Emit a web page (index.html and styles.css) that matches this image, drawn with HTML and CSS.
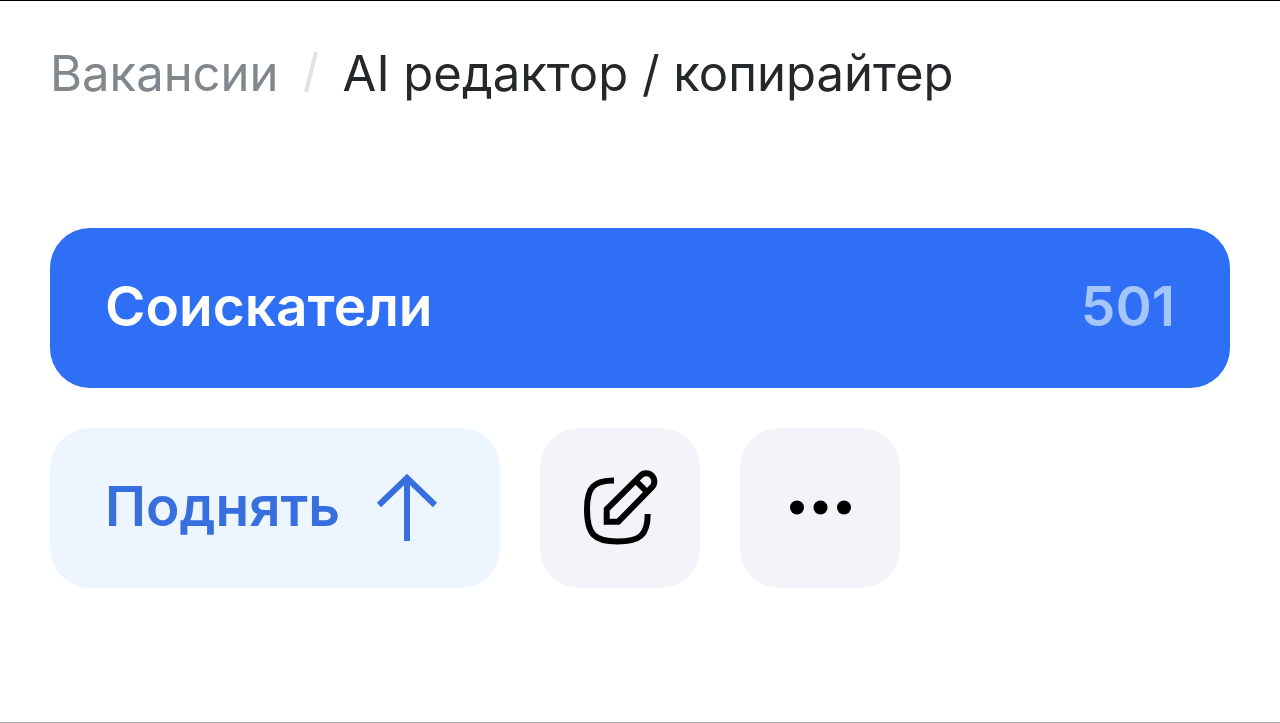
FILE: index.html
```html
<!DOCTYPE html>
<html lang="ru">
<head>
    <meta charset="UTF-8">
    <meta name="viewport" content="width=device-width, initial-scale=1">
    <title>AI редактор / копирайтер</title>
    <link rel="stylesheet" href="styles.css">
</head>
<body>
    <main class="page">
        <nav class="breadcrumbs">
            <a href="#">Вакансии</a>
            <svg class="separator" viewBox="0 0 16 44" aria-hidden="true">
                <path d="M13 0L3 40" />
            </svg>
            <span class="current">AI редактор / копирайтер</span>
        </nav>

        <button class="btn btn-primary" type="button">
            <span>Соискатели</span>
            <span class="count">501</span>
        </button>

        <div class="actions">
            <button class="btn btn-raise" type="button">
                <span>Поднять</span>
                <svg class="arrow" viewBox="0 0 72 72" aria-hidden="true">
                    <path d="M6 33L34 6L62 33M34 6V69" />
                </svg>
            </button>
            <button class="btn btn-icon" type="button" aria-label="Редактировать">
                <svg class="icon" viewBox="0 0 80 80" aria-hidden="true">
                    <path d="M34 12.5C14 12.5 7 19 7 41C7 66 14 73.5 37.5 73.5C60 73.5 67.7 67 67.7 46" />
                    <path d="M26.7 53.7V41.3L60.3 7.8A8.1 8.1 0 0 1 72 19.2L38.3 53.7ZM55.5 12.5L67 24" />
                </svg>
            </button>
            <button class="btn btn-icon" type="button" aria-label="Ещё">
                <svg class="icon dots" viewBox="0 0 80 80" aria-hidden="true">
                    <circle cx="17" cy="39.5" r="7" />
                    <circle cx="40.5" cy="39.5" r="7" />
                    <circle cx="64" cy="39.5" r="7" />
                </svg>
            </button>
        </div>
    </main>
</body>
</html>
```
FILE: styles.css
```css
* {
    box-sizing: border-box;
}
body {
    margin: 0;
    min-height: 100vh;
    font-family: Inter, "Liberation Sans", sans-serif;
    background-color: #fff;
    border-top: 1px solid #000;
    border-bottom: 1px solid #aaa;
}
.page {
    padding: 43px 50px;
}
.breadcrumbs {
    display: flex;
    flex-wrap: wrap;
    align-items: center;
    margin-bottom: 124px;
    font-size: 49px;
    line-height: 60px;
}
.breadcrumbs a {
    color: #81878d;
    text-decoration: none;
}
.separator {
    width: 16px;
    height: 44px;
    margin: 0 24px;
    fill: none;
    stroke: #dfe3e4;
    stroke-width: 4;
}
.current {
    color: #25282a;
}
.btn {
    display: flex;
    align-items: center;
    justify-content: space-between;
    height: 160px;
    padding: 0 55px;
    border: none;
    border-radius: 40px;
    font-family: inherit;
    font-size: 55px;
    font-weight: 600;
    cursor: pointer;
}
.btn span {
    padding-bottom: 4px;
}
.btn-primary {
    width: 100%;
    color: #fff;
    background-color: #2f6ff6;
}
.count {
    color: #a5c5fd;
}
.actions {
    display: flex;
    flex-wrap: wrap;
    gap: 40px;
    margin-top: 40px;
}
.btn-raise {
    width: 450px;
    color: #386fdf;
    background-color: #edf5ff;
}
.arrow {
    width: 72px;
    height: 72px;
    fill: none;
    stroke: #386fdf;
    stroke-width: 6;
}
.btn-icon {
    justify-content: center;
    width: 160px;
    padding: 0;
    background-color: #f2f4f9;
}
.icon {
    width: 80px;
    height: 80px;
    fill: none;
    stroke: #000;
    stroke-width: 6;
}
.dots {
    fill: #000;
    stroke: none;
}
```
